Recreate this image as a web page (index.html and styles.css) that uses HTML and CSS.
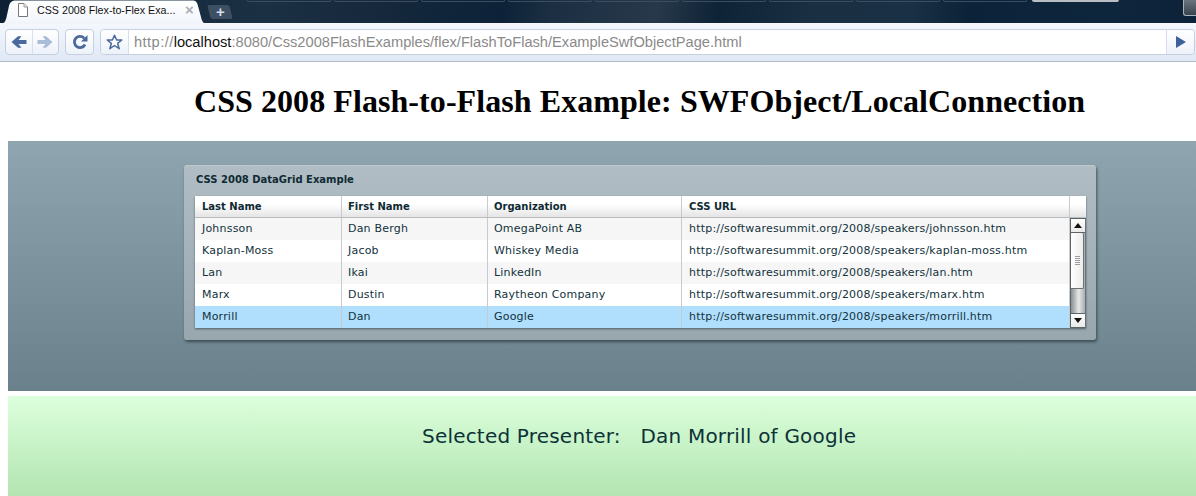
FILE: index.html
```html
<!DOCTYPE html>
<html lang="en">
<head>
<meta charset="utf-8">
<title>CSS 2008 Flex-to-Flex Example</title>
<link rel="stylesheet" href="styles.css">
</head>
<body>
<header class="chrome">
  <div class="tabstrip">
    <div class="tab">
      <svg class="tab-shape" width="208" height="24" viewBox="0 0 208 24"><defs><linearGradient id="tabfill" x1="0" y1="0" x2="0" y2="1"><stop offset="0" stop-color="#fff"/><stop offset="1" stop-color="#f1f5fb"/></linearGradient></defs><path d="M0 24C5 24 6 20 7 15L9 6C10 2 12 .5 16 .5H192C196 .5 197 2 198 6L201 17C202 22 204 24 208 24Z" fill="url(#tabfill)"/></svg>
      <svg class="page-icon" width="10" height="14" viewBox="0 0 10 14"><path d="M.5 .5H6L9.500 4V13.500H.500Z" fill="#fff" stroke="#77777a"/><path d="M6 .5V4H9.500" fill="#eee" stroke="#9a9a9c"/></svg>
      <span class="tab-title">CSS 2008 Flex-to-Flex Exa...</span>
      <span class="tab-close">×</span>
    </div>
    <div class="newtab"><span>+</span></div>
    <div class="top-tabs">
      <i></i><i></i><i></i><i></i><i></i><i></i><i></i><i></i><i></i><i class="hot"></i>
    </div>
    <div class="winbtn"></div>
  </div>
  <div class="toolbar">
    <div class="btn nav">
      <span class="navhalf"><svg width="16" height="14" viewBox="0 0 16 14"><path d="M.5 7L7 1.200H10.500L7.500 5H15.500V9H7.500L10.500 12.800H7Z" fill="#4a6a9c"/></svg></span>
      <span class="navhalf"><svg width="16" height="14" viewBox="0 0 16 14"><path d="M15.500 7L9 1.200H5.500L8.500 5H.5V9H8.500L5.500 12.800H9Z" fill="#a9bcd8"/></svg></span>
    </div>
    <div class="btn reload"><svg width="16" height="16" viewBox="0 0 16 16"><path d="M13 10.500A5.600 5.600 0 1 1 12.200 4.200" fill="none" stroke="#4a6a9c" stroke-width="2.800"/><path d="M15.500 1V7.500H9Z" fill="#4a6a9c"/></svg></div>
    <div class="omni">
      <span class="star"><svg width="17" height="16" viewBox="0 0 17 16"><path d="M8.500 1.200L10.600 6H15.800L11.600 9.300L13.200 14.700L8.500 11.500L3.800 14.700L5.400 9.300L1.200 6H6.400Z" fill="#fff" stroke="#4a6a9c" stroke-width="1.500" stroke-linejoin="round"/></svg></span>
      <span class="url"><span class="proto">http://</span><b>localhost</b>:8080/Css2008FlashExamples/flex/FlashToFlash/ExampleSwfObjectPage.html</span>
      <span class="go"><svg width="10" height="12" viewBox="0 0 10 12"><path d="M0 0L10 6L0 12Z" fill="#3f6199"/></svg></span>
    </div>
  </div>
</header>
<main class="page">
  <h1>CSS 2008 Flash-to-Flash Example: SWFObject/LocalConnection</h1>
  <section class="flash">
    <div class="panel">
      <div class="panel-title">CSS 2008 DataGrid Example</div>
      <div class="grid">
        <div class="row head">
          <div class="c c1">Last Name</div><div class="c c2">First Name</div><div class="c c3">Organization</div><div class="c c4">CSS URL</div><div class="c c5"></div>
        </div>
        <div class="body">
          <div class="rows">
            <div class="row alt"><div class="c c1">Johnsson</div><div class="c c2">Dan Bergh</div><div class="c c3">OmegaPoint AB</div><div class="c c4">http://softwaresummit.org/2008/speakers/johnsson.htm</div></div>
            <div class="row"><div class="c c1">Kaplan-Moss</div><div class="c c2">Jacob</div><div class="c c3">Whiskey Media</div><div class="c c4">http://softwaresummit.org/2008/speakers/kaplan-moss.htm</div></div>
            <div class="row alt"><div class="c c1">Lan</div><div class="c c2">Ikai</div><div class="c c3">LinkedIn</div><div class="c c4">http://softwaresummit.org/2008/speakers/lan.htm</div></div>
            <div class="row"><div class="c c1">Marx</div><div class="c c2">Dustin</div><div class="c c3">Raytheon Company</div><div class="c c4">http://softwaresummit.org/2008/speakers/marx.htm</div></div>
            <div class="row sel"><div class="c c1">Morrill</div><div class="c c2">Dan</div><div class="c c3">Google</div><div class="c c4">http://softwaresummit.org/2008/speakers/morrill.htm</div></div>
          </div>
          <div class="scroll">
            <div class="arrow"><svg width="8" height="5" viewBox="0 0 8 5"><path d="M4 0L8 5H0Z" fill="#111"/></svg></div>
            <div class="track">
              <div class="thumb"><span></span><span></span><span></span><span></span><span></span></div>
            </div>
            <div class="arrow"><svg width="8" height="5" viewBox="0 0 8 5"><path d="M4 5L8 0H0Z" fill="#111"/></svg></div>
          </div>
        </div>
      </div>
    </div>
  </section>
  <section class="selected">Selected Presenter:&nbsp;&nbsp; Dan Morrill of Google</section>
</main>
</body>
</html>
```
FILE: styles.css
```css
* { box-sizing: border-box; }
html, body { margin: 0; padding: 0; }
body { width: 1196px; height: 496px; overflow: hidden; background: #fff; font-family: "Liberation Sans", Arial, sans-serif; }

.chrome { height: 62px; border-bottom: 1px solid #b4bac4; }
.tabstrip { height: 23px; background: linear-gradient(100deg, #0e2134 0%, #1c3044 22%, #15283c 32%, #0d2238 42%, #1c2f42 46%, #27384a 55%, #0e2336 60%, #1a2f42 68%, #1a3044 76%, #0c2238 81%, #0e263c 92%, #0d2238 100%); display: flex; position: relative; }
.tab { position: relative; width: 208px; height: 23px; display: flex; align-items: center; padding: 0 0 3px 18px; z-index: 1; flex: none; }
.tab-shape { position: absolute; left: 0; top: 0; }
.page-icon { position: relative; margin-right: 9px; flex: none; }
.tab-title { position: relative; font-size: 10.7px; color: #111; white-space: nowrap; width: 148px; }
.tab-close { position: relative; font-size: 15px; font-weight: 700; color: #a9aeb5; line-height: 12px; }
.newtab { width: 22px; height: 14px; margin: 5px 0 0 1px; background: #3d4f63; transform: skewX(14deg); border-radius: 2px; display: flex; align-items: center; justify-content: center; flex: none; }
.newtab span { transform: skewX(-14deg); color: #d5dee8; font-size: 15px; font-weight: 700; line-height: 14px; }
.top-tabs { display: flex; gap: 3px; margin-left: 16px; height: 3px; flex: none; }
.top-tabs i { width: 84px; height: 2px; border: 1px solid #3b4d60; border-top: 0; border-radius: 0 0 3px 3px; }
.top-tabs i.hot { border-color: #b8bec4; border-width: 0 1px 2px; width: 87px; margin-left: 2px; }
.winbtn { width: 13px; height: 16px; margin-left: auto; border: 1px solid #aab2ba; border-right: 0; border-top: 0; border-radius: 0 0 0 3px; background: linear-gradient(#69747f, #39434e); }

.toolbar { height: 38px; background: linear-gradient(#f4f8fd, #dfe8f5); display: flex; align-items: flex-start; padding: 6px 1px 0 5px; }
.btn, .omni { height: 26px; border: 1px solid #c6cfe0; border-radius: 4px; background: linear-gradient(#fff, #edf2fa); display: flex; align-items: center; }
.nav { width: 54px; }
.navhalf { flex: 1; display: flex; align-items: center; justify-content: center; height: 100%; }
.navhalf + .navhalf { border-left: 1px solid #d9e0ec; }
.reload { width: 29px; margin-left: 6px; justify-content: center; }
.omni { width: 1095px; margin-left: 6px; background: #fff; }
.star { width: 28px; height: 100%; flex: none; display: flex; align-items: center; justify-content: center; background: linear-gradient(#fff, #edf2fa); border-right: 1px solid #d6deeb; border-radius: 4px 0 0 4px; }
.url { flex: 1; padding-left: 5px; font-size: 14.65px; color: #8a8a8a; white-space: nowrap; }
.proto { letter-spacing: .43px; }
.url b { font-weight: 400; color: #111; }
.go { width: 28px; height: 100%; flex: none; display: flex; align-items: center; justify-content: center; background: linear-gradient(#fff, #edf2fa); border-left: 1px solid #d6deeb; border-radius: 0 4px 4px 0; }

.page { padding-left: 8px; }
h1 { margin: 0; height: 79px; padding: 21px 0 0 186px; font: 700 32px/37px "Liberation Serif", "Times New Roman", serif; letter-spacing: .07px; color: #000; white-space: nowrap; }
.flash { height: 250px; background: linear-gradient(#8fa5af, #6a808b); padding: 24px 0 0 176px; }
.panel { width: 912px; height: 175px; border-radius: 3px; background: linear-gradient(#b1bdc4, #98a7ae); box-shadow: 1px 2px 3px rgba(30, 45, 55, .65); border-top: 1px solid #c0cad0; padding: 0 10px 0 11px; }
.panel-title { height: 30px; padding: 8px 0 0 1px; font: 700 10px/12px "DejaVu Sans", Verdana, sans-serif; color: #0e2a33; }
.grid { width: 891px; box-shadow: 0 1px 2px rgba(30, 45, 55, .6); }
.row { display: flex; height: 22px; background: #fff; }
.head { height: 22px; background: linear-gradient(#fff 40%, #e4e4e4); border-bottom: 1px solid #b7bcc0; }
.c { height: 100%; padding-left: 7px; font: 400 11px/21px "DejaVu Sans", Verdana, sans-serif; letter-spacing: .2px; color: #12323c; white-space: nowrap; border-right: 1px solid #c8cbce; flex: none; }
.head .c { font: 700 10px/21px "DejaVu Sans", Verdana, sans-serif; color: #0e2a33; letter-spacing: 0; }
.c1 { width: 147px; }
.c2 { width: 146px; padding-left: 6px; }
.c3 { width: 194px; padding-left: 6px; }
.c4 { width: 388px; }
.c5 { width: 16px; border-right: 0; }
.body { display: flex; }
.rows { width: 875px; flex: none; }
.alt { background: #f6f6f6; }
.sel { background: #b0dffd; }
.scroll { width: 16px; height: 110px; border-left: 1px solid #5d6468; border-right: 1px solid #6a7175; background: linear-gradient(90deg, #8a8f92, #e6e8e9 55%, #a8adaf); display: flex; flex-direction: column; }
.arrow { height: 15px; flex: none; background: linear-gradient(#fff, #e9e9e9); border-top: 1px solid #5d6468; border-bottom: 1px solid #5d6468; display: flex; align-items: center; justify-content: center; }
.track { flex: 1; }
.thumb { width: 13px; height: 56px; background: linear-gradient(90deg, #fff, #ececec); border-right: 1px solid #6b7276; border-bottom: 1px solid #6b7276; border-radius: 0 2px 2px 0; display: flex; flex-direction: column; align-items: center; justify-content: center; gap: 1px; }
.thumb span { width: 5px; height: 1px; background: #9a9fa2; }
.selected { height: 100px; margin-top: 5px; background: linear-gradient(#dcffdc, #b3e5b1); padding: 27px 0 0 414px; font: 400 20px/26px "DejaVu Sans", Verdana, sans-serif; letter-spacing: .2px; color: #0c3237; white-space: nowrap; }
```
